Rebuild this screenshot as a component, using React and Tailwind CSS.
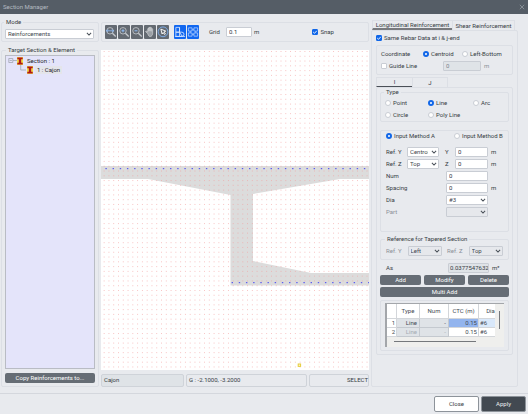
import React from "react";

const box = "rounded-[2px] border border-[#dcdfe5]";

function Group({ legend, className = "", children }) {
  return (
    <fieldset className={`min-w-0 ${box} ${className}`}>
      {legend && <legend className="ml-[-1px] h-2 px-[2px] leading-[8px]">{legend}</legend>}
      {children}
    </fieldset>
  );
}

function Chevron({ className = "" }) {
  return (
    <svg viewBox="0 0 8 8" className={`pointer-events-none absolute size-[6px] ${className}`} fill="none" stroke="#4a5159" strokeWidth="1.4">
      <path d="M1.2 2.6 4 5.4 6.8 2.6" />
    </svg>
  );
}

function Select({ id, label, value, disabled, className = "" }) {
  return (
    <span className={`relative block h-[10px] ${className}`}>
      <select
        id={id}
        aria-label={label}
        disabled={disabled}
        className="block h-[10px] w-full appearance-none overflow-hidden rounded-[1px] border border-[#c9cdd4] bg-white pl-[2px] pr-[10px] leading-[8px] text-[#41474f] disabled:bg-[#e6e8ec] disabled:opacity-100"
      >
        <option>{value}</option>
      </select>
      <Chevron className="right-[2px] top-[2px]" />
    </span>
  );
}

function Input({ id, label, value, disabled, className = "" }) {
  return (
    <input
      id={id}
      aria-label={label}
      defaultValue={value}
      disabled={disabled}
      className={`block h-[10px] min-w-0 rounded-[1px] border border-[#c9cdd4] bg-white pb-px pl-[2px] leading-[7px] text-[#30363e] disabled:bg-[#dfe3e7] disabled:text-[#7c828a] ${className}`}
    />
  );
}

function Radio({ name, label, checked, className = "" }) {
  return (
    <label className={`flex items-center gap-[2px] whitespace-nowrap ${className}`}>
      <input
        type="radio"
        name={name}
        defaultChecked={checked}
        className="size-[6px] shrink-0 appearance-none rounded-full border border-[#c9cdd4] bg-white checked:border-2 checked:border-[#1167e8]"
      />
      {label}
    </label>
  );
}

function Check({ label, checked, className = "" }) {
  return (
    <label className={`relative flex items-center gap-[2px] whitespace-nowrap ${className}`}>
      <input
        type="checkbox"
        defaultChecked={checked}
        className="peer size-[6px] shrink-0 appearance-none rounded-[1px] border border-[#c9cdd4] bg-white checked:border-[#1167e8] checked:bg-[#1167e8]"
      />
      <svg viewBox="0 0 6 6" className="absolute left-0 hidden size-[6px] peer-checked:block" fill="none" stroke="#fff" strokeWidth="0.9">
        <path d="M1.2 3 2.5 4.3 4.8 1.8" />
      </svg>
      {label}
    </label>
  );
}

function Lens({ children }) {
  return (
    <>
      <circle cx="5.4" cy="5.2" r="3.5" />
      <path d="m8 7.800 3.600 3.600" strokeWidth="1.4" />
      {children}
    </>
  );
}

const tools = [
  { name: "Zoom window", art: <g><Lens /><path d="M1 5.2h8.800M3.2 3.600 1.600 5.200l1.600 1.600M7.600 3.600l1.600 1.600-1.600 1.600" stroke="#8fbcf5" strokeWidth="0.9" /></g> },
  { name: "Zoom in", art: <Lens><path d="M3.800 5.200h3.200M5.400 3.600v3.200" stroke="#8fbcf5" strokeWidth="1.1" /></Lens> },
  { name: "Zoom out", art: <Lens><path d="M3.800 5.200h3.200" stroke="#8fbcf5" strokeWidth="1.1" /></Lens> },
  { name: "Pan", art: <path d="M3.9 8 2 6.4c-.5-.5.2-1.2.8-.8l1.2.8V3.2c0-.8 1-.8 1 0V2.1c0-.8 1.1-.8 1.1 0v-.3c0-.8 1.1-.8 1.1 0v.5c0-.8 1.1-.7 1.1.1v1c0-.7 1.1-.7 1.1.1v4.3c0 1.9-1 3.600-2.7 3.600-1.4 0-2-1.200-2.8-3.400ZM5 3v2.7M6.1 2v3.6M7.2 2.3v3.4M8.3 3.4v2.5" fill="#9ba0a6" stroke="#e2e4e6" strokeWidth="0.6" /> },
  { name: "Select", art: <g><circle cx="6.5" cy="6.3" r="5.300" stroke="#7fb0ee" strokeWidth="1" /><path d="M4.2 3.4 9.5 5.6 7.5 6.5l1.6 2-.9.7-1.6-2-1.1 1.5Z" stroke="#fff" strokeWidth="1" /></g> },
];

function ToolButton({ name, active, children }) {
  return (
    <button aria-label={name} className={`flex h-[14px] w-3 items-center justify-center rounded-[1px] ${active ? "bg-[#1167f0]" : "bg-[#646a72]"}`}>
      <svg viewBox="0 0 13 13" className="size-3 shrink-0" fill="none" stroke="#c5c9ce" strokeWidth="0.9">
        {children}
      </svg>
    </button>
  );
}

const PITCH = 4.78;
const BAR = 7.18;

function SectionDrawing() {
  return (
    <svg viewBox="0 0 268 320" preserveAspectRatio="xMidYMid slice" className="h-0 min-h-80 w-full flex-1 bg-white">
      <path d="M0 116H268V129H239L152 144V211L210 223H268V235.5H129.500V145L47 129H0Z" fill="#dcdcdc" />
      {Array.from({ length: 67 }, (_, i) => (
        <path key={i} d={`M2.700 ${1.5 + i * PITCH}H268`} stroke="#f3a0a0" strokeOpacity="0.75" strokeWidth="0.9" strokeDasharray="0.9 3.88" />
      ))}
      {Array.from({ length: 37 }, (_, i) => (
        <rect key={i} x={4.4 + i * BAR} y="118" width="1.400" height="1.200" fill="#5c5cf0" />
      ))}
      {Array.from({ length: 20 }, (_, i) => (
        <rect key={i} x={130.6 + i * BAR} y="232" width="1.400" height="1.200" fill="#5c5cf0" />
      ))}
      <rect x="197.200" y="314" width="2.400" height="2.400" fill="#fdf6c8" stroke="#e6cc3c" strokeWidth="1" />
    </svg>
  );
}

function BeamIcon() {
  return (
    <svg viewBox="0 0 6 8" className="h-2 w-[6px] shrink-0">
      <path d="M0 0h6v8H0z" fill="#f2dc4c" />
      <path d="M.3.500h5.400v1.800H4.200v3.400h1.500v1.800h-5.400V5.700H1.800V2.300H.3z" fill="#b01818" />
    </svg>
  );
}

function Tree() {
  return (
    <ul className="flex-1 border border-[#b9bcc4] bg-[#e4e4fa] pl-[2px] text-[#1f242b]">
      <li>
        <div className="flex h-[9px] items-center">
          <svg viewBox="0 0 9 9" className="size-[9px]" fill="none" stroke="#9a9ea8" strokeWidth="0.7">
            <path d="M.8 2.500h4v4h-4zM1.700 4.500h2.200M5 4.500h4" />
          </svg>
          <BeamIcon />
          <span className="ml-1">Section : 1</span>
        </div>
        <ul>
          <li className="flex h-[9px] items-center pl-[12px]">
            <svg viewBox="0 0 7 9" className="h-[9px] w-[7px]" fill="none" stroke="#9a9ea8" strokeWidth="0.700">
              <path d="M.7 0v5H6" />
            </svg>
            <BeamIcon />
            <span className="ml-[2px] bg-[#e4e5ea] px-[2px] leading-[8px]">1 : Cajon</span>
          </li>
        </ul>
      </li>
    </ul>
  );
}

function Field({ id, label, unit, children }) {
  return (
    <div className="flex h-[10px] items-center">
      <label htmlFor={id} className="w-[60px]">{label}</label>
      <div className="w-[42px]">{children}</div>
      <span className="ml-[3px]">{unit}</span>
    </div>
  );
}

function RefField({ axis, value }) {
  return (
    <div className="flex h-[10px] items-center">
      <label htmlFor={`ref${axis}`} className="w-[21px]">Ref. {axis}</label>
      <Select id={`ref${axis}`} value={value} className="w-8" />
      <label htmlFor={`off${axis}`} className="ml-[6px] w-[10px]">{axis}</label>
      <Input id={`off${axis}`} value="0" className="w-[33px]" />
      <span className="ml-[3px]">m</span>
    </div>
  );
}

const action = "h-[10px] rounded-[2px] bg-[#666d75] text-white";

function RebarTable() {
  const th = "h-[15px] border-b border-r border-[#d3d6da] p-0 font-normal";
  return (
    <div className="h-11 border-l-2 border-t border-[#a3a6aa] bg-[#efefed]">
      <div className="flex">
        <div className="min-w-0 flex-1 overflow-hidden bg-white">
          <table className="w-[116px] table-fixed border-separate border-spacing-0 text-[#454b53]">
            <thead>
              <tr>
                <th className={`${th} w-[10px]`} />
                <th className={`${th} w-[23px]`}>Type</th>
                <th className={`${th} w-[29px]`}>Num</th>
                <th className={`${th} w-[30px]`}>CTC (m)</th>
                <th className={th}>Dia</th>
              </tr>
            </thead>
            <tbody>
              {[1, 2].map((n) => (
                <tr key={n} className="h-[9px] text-right leading-[8px]">
                  <td className="border-b border-r border-[#d3d6da] p-0 pr-px">{n}</td>
                  <td className={`border-b border-r border-[#c4c9cf] bg-[#dfe3e7] p-0 pr-[2px] ${n === 2 ? "text-[#a5abb2]" : ""}`}>Line</td>
                  <td className={`border-b border-r border-[#c4c9cf] bg-[#dfe3e7] p-0 pr-[2px] ${n === 2 ? "text-[#a5abb2]" : ""}`}>-</td>
                  <td className={`border-b border-r border-[#d3d6da] p-0 pr-px ${n === 1 ? "bg-[#92b4ee]" : ""}`}>0.15</td>
                  <td className={`border-b border-[#d3d6da] p-0 pl-px text-left ${n === 1 ? "bg-[#d9e8fa]" : ""}`}>#6</td>
                </tr>
              ))}
            </tbody>
          </table>
        </div>
        <div className="w-[9px] pl-1 pt-[7px]">
          <div className="h-[18px] w-px bg-[#75787c]" />
        </div>
      </div>
      <div className="ml-[7px] mr-[28px] mt-1 h-px bg-[#75787c]" />
    </div>
  );
}

function LeftPane() {
  return (
    <aside className="flex w-[98px] shrink-0 flex-col">
      <Group legend="Mode" className="px-[3px] pb-[2px] pt-[3px]">
        <Select label="Mode" value="Reinforcements" className="mr-px" />
      </Group>
      <Group legend="Target Section & Element" className="mt-1 flex flex-1 flex-col px-[3px] pb-[3px] pt-px [&>legend]:ml-px">
        <Tree />
        <button className={`mt-1 ${action}`}>Copy Reinforcements to...</button>
      </Group>
    </aside>
  );
}

function CenterPane() {
  const cell = "h-[13px] rounded-[2px] border border-[#cfd3d9] pl-[2px] leading-[10px]";
  return (
    <section className="flex min-w-0 flex-1 flex-col pt-1">
      <div className={`flex items-center py-[2px] pl-[3px] ${box}`}>
        <div className="flex gap-px">
          {tools.map((t) => (
            <ToolButton key={t.name} name={t.name}>{t.art}</ToolButton>
          ))}
        </div>
        <div className="ml-[5px] flex gap-px">
          <ToolButton name="Snap to section" active>
            <path d="M2 1.500h4v5.200H2zM2 6.700h4v4.600H2zM6 6.700h2.500a2.300 2.300 0 0 1 0 4.600H6M1 11.300h11M6 1.500v5.200l3 4.600" stroke="#d6e6ff" />
          </ToolButton>
          <ToolButton name="Show grid" active>
            <path d="M1.500 2h4v3.500h-4zM7.500 2h4v3.500h-4zM1.500 7.500h4V11h-4zM7.500 7.500h4V11h-4zM5.500 4h2M5.500 9h2M3.500 5.500v2M9.500 5.500v2" stroke="#a9caff" />
          </ToolButton>
        </div>
        <label htmlFor="grid" className="ml-[10px] w-[17px]">Grid</label>
        <Input id="grid" value="0.1" className="w-[26px]" />
        <span className="ml-[2px]">m</span>
        <Check label="Snap" checked className="ml-auto mr-[34px]" />
      </div>
      <div className="mt-2 flex flex-1 flex-col">
        <SectionDrawing />
      </div>
      <div className="mt-1 flex gap-[2px]">
        <div className={`w-[83px] bg-[#dfe3e7] ${cell}`}>Cajon</div>
        <div className={`flex-1 ${cell}`}>G : -2.1000, -3.2000</div>
        <div className={`w-[60px] text-right ${cell}`}>SELECT</div>
      </div>
    </section>
  );
}

function RightPane() {
  const tab = "h-[10px] border-[#dcdfe5]";
  return (
    <section className="flex w-[147px] shrink-0 flex-col pt-[2px]">
      <div className="ml-px flex">
        <button className={`w-20 border-b-2 border-b-[#787a7e] border-l border-t ${tab}`}>Longitudinal Reinforcement</button>
        <button className={`w-[63px] border-x border-t leading-[7px] ${tab}`}>Shear Reinforcement</button>
      </div>
      <div className={`flex-1 px-1 pb-4 pt-[3px] ${box}`}>
        <Check label="Same Rebar Data at i & j-end" checked className="h-2" />
        <Group className="mt-[3px] px-1 pb-[3px] pt-[3px]">
          <div className="flex h-[10px] items-center">
            <span className="w-[42px]">Coordinate</span>
            <Radio name="coord" label="Centroid" checked className="w-[39px]" />
            <Radio name="coord" label="Left-Bottom" />
          </div>
          <div className="mt-[2px] flex h-[10px] items-center">
            <Check label="Guide Line" className="w-[62px]" />
            <Input label="Guide line distance" value="0" disabled className="w-[38px]" />
            <span className="ml-[3px] text-[#8b9098]">m</span>
          </div>
        </Group>
        <div className="mt-[2px] flex">
          <button className="h-[10px] w-9 border-b border-l border-t border-[#dcdfe5] border-b-[#4a4f57]">I</button>
          <button className="h-[10px] w-9 border border-b-0 border-[#dcdfe5]">J</button>
        </div>
        <div className={`px-[3px] pb-[3px] ${box}`}>
          <Group legend="Type" className="px-1 pb-px pt-[2px]">
            <div className="grid grid-cols-[43px_45px_auto] gap-y-[2px] [&>label]:h-[10px]">
              <Radio name="type" label="Point" />
              <Radio name="type" label="Line" checked />
              <Radio name="type" label="Arc" />
              <Radio name="type" label="Circle" />
              <Radio name="type" label="Poly Line" />
            </div>
          </Group>
          <Group className="mt-2 px-[5px] pb-[14px]">
            <div className="flex h-[10px] items-center">
              <Radio name="method" label="Input Method A" checked className="w-[68px]" />
              <Radio name="method" label="Input Method B" />
            </div>
            <div className="mt-[6px] flex flex-col gap-[2px]">
              <RefField axis="Y" value="Centroid" />
              <RefField axis="Z" value="Top" />
              <Field id="num" label="Num"><Input id="num" value="0" className="w-full" /></Field>
              <Field id="spacing" label="Spacing" unit="m"><Input id="spacing" value="0" className="w-full" /></Field>
              <Field id="dia" label="Dia"><Select id="dia" value="#3" /></Field>
              <Field id="part" label={<span className="text-[#8b9098]">Part</span>}><Select id="part" value="" disabled /></Field>
            </div>
          </Group>
          <Group legend="Reference for Tapered Section" className="mt-[3px] px-[5px] pb-[3px] pt-[3px]">
            <div className="flex h-[10px] items-center text-[#8b9098]">
              <label htmlFor="taperY" className="w-[22px]">Ref. Y</label>
              <Select id="taperY" value="Left" disabled className="w-[35px]" />
              <label htmlFor="taperZ" className="ml-[5px] w-[22px]">Ref. Z</label>
              <Select id="taperZ" value="Top" disabled className="w-[35px]" />
            </div>
          </Group>
          <div className="mt-[3px] flex h-[10px] items-center pl-[6px]">
            <label htmlFor="as" className="w-[62px]">As</label>
            <input id="as" readOnly defaultValue="0.0377547632" className="h-[10px] w-[41px] rounded-[1px] border border-[#c9cdd4] bg-[#dfe3e7] pb-px pl-px leading-[7px]" />
            <span className="ml-[3px]">m²</span>
          </div>
          <div className="mt-[2px] grid grid-cols-3 gap-[3px]">
            <button className={action}>Add</button>
            <button className={action}>Modify</button>
            <button className={action}>Delete</button>
          </div>
          <button className={`mt-[2px] block w-full ${action}`}>Multi Add</button>
          <Group className="mt-[3px] px-1 pb-[3px] pt-[2px]">
            <RebarTable />
          </Group>
        </div>
      </div>
    </section>
  );
}

export default function App() {
  return (
    <div className="flex min-h-screen flex-col bg-[#e8eaee] font-['Roboto','Inter',sans-serif] text-[6px] leading-[8px] text-[#363c44]">
      <header className="flex h-[14px] items-center justify-between bg-[#555d66] px-[3px] text-[#b4bac0]">
        <h1>Section Manager</h1>
        <button aria-label="Close window">
          <svg viewBox="0 0 6 6" className="size-[6px]" fill="none" stroke="#9299a0" strokeWidth="0.8">
            <path d="m.8.8 4.400 4.400M5.200.8.800 5.200" />
          </svg>
        </button>
      </header>
      <main className="flex flex-1 gap-[2px] pb-[6px] pl-px pr-[10px] pt-1">
        <LeftPane />
        <CenterPane />
        <RightPane />
      </main>
      <footer className="flex justify-end gap-[2px] border-t border-[#d4d7dd] py-[2px] pr-[2px]">
        <button className="h-4 w-[45px] rounded-[2px] border border-[#8d939a] bg-white">Close</button>
        <button className="h-4 w-[45px] rounded-[2px] border border-[#8d939a] bg-[#424951] text-[#eceef0]">Apply</button>
      </footer>
    </div>
  );
}
